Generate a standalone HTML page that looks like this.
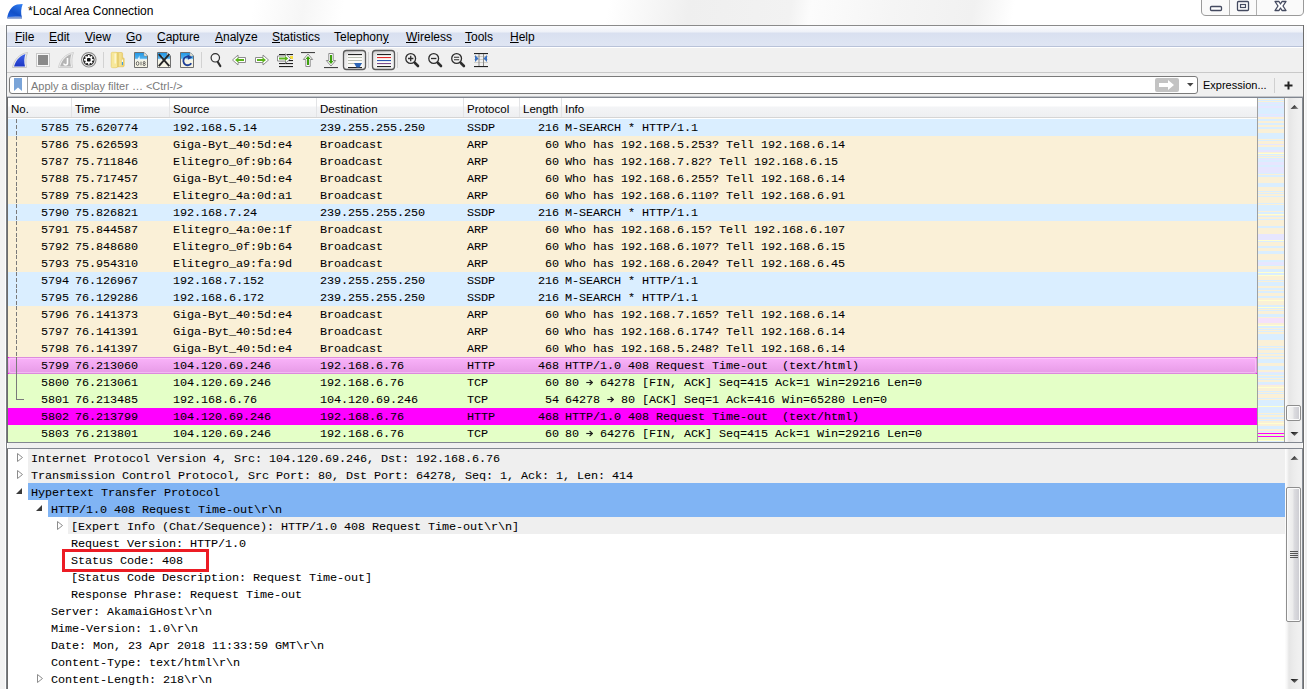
<!DOCTYPE html><html><head><meta charset="utf-8"><style>
*{margin:0;padding:0;box-sizing:border-box}
html,body{width:1307px;height:689px;overflow:hidden;background:#fff;position:relative;font-family:"Liberation Sans",sans-serif;font-size:12px;color:#000}
.a{position:absolute}
.m{font-family:"Liberation Mono",monospace;font-size:11.8px;white-space:pre;line-height:17px;letter-spacing:-0.08px;-webkit-text-stroke:0.05px #000}
.s{font-family:"Liberation Sans",sans-serif;font-size:12px;white-space:pre}
u{text-decoration:underline;text-underline-offset:0.5px;text-decoration-thickness:1px}
</style></head><body><div class="a" style="left:0;top:0;width:1307px;height:689px;background:#fff"></div>
<div class="a" style="left:0;top:0;width:1307px;height:25px;background:linear-gradient(100deg,#fff 0,#fff 250px,#f6f6f6 300px,#fff 340px,#fff 600px,#efefef 680px,#f2f2f2 780px,#fcfcfc 800px,#f5f5f5 880px,#f1f1f1 960px,#fff 1000px,#fff 1307px)"></div>
<svg class="a" style="left:0px;top:0px" width="26" height="22" viewBox="0 0 26 22">
<defs><linearGradient id="sg" x1="0.8" y1="0" x2="0.2" y2="1"><stop offset="0" stop-color="#2f7cf0"/><stop offset="0.6" stop-color="#1250c8"/><stop offset="1" stop-color="#1a5fe0"/></linearGradient>
<linearGradient id="sb" x1="0" y1="0" x2="0" y2="1"><stop offset="0" stop-color="#8fb0f0"/><stop offset="1" stop-color="#6f86b8"/></linearGradient></defs>
<path d="M7.2 18.2 C8 12 11.5 6 17 4.6 L22.7 4 C21 8.5 20.6 13 22 17.5 L22 18.2 Z" fill="url(#sg)"/>
<path d="M7.6 17 C12 16.3 18 16.3 22 16.8 L22 18.5 L7.2 18.5 Z" fill="url(#sb)"/>
</svg>
<div class="a s" style="left:28px;top:3px;width:300px;height:16px;font-size:12px;line-height:16px;">*Local Area Connection</div>
<svg class="a" style="left:1201px;top:0px" width="104" height="17" viewBox="0 0 104 17">
<path d="M0.5 -1 V11 Q0.5 15.5 5 15.5 H98 Q102.5 15.5 102.5 11 V-1" fill="#fafafa" stroke="#9a9a9a"/>
<line x1="28.5" y1="0" x2="28.5" y2="15" stroke="#b0b0b0"/>
<line x1="55.5" y1="0" x2="55.5" y2="15" stroke="#b0b0b0"/>
<rect x="9.5" y="6.5" width="11" height="4" rx="1" fill="#fff" stroke="#444a60" stroke-width="1.3"/>
<rect x="36.5" y="1.5" width="11" height="9" rx="1" fill="#fff" stroke="#444a60" stroke-width="1.3"/>
<rect x="39.5" y="4.5" width="5" height="3" fill="#fff" stroke="#444a60" stroke-width="1.2"/>
<path d="M74 1.5 L78 1.5 L79.5 4 L81 1.5 L85 1.5 L82 6 L85 10.5 L81 10.5 L79.5 8 L78 10.5 L74 10.5 L77 6 Z" fill="#fff" stroke="#444a60" stroke-width="1.3" stroke-linejoin="round"/>
</svg>
<div class="a" style="left:6px;top:25px;width:1298px;height:664px;background:#f0f0f0;border:2px solid #8a8a8a;border-bottom:none;border-top:1px solid #8a8a8a"></div>
<div class="a" style="left:7px;top:26px;width:1296px;height:20px;background:linear-gradient(#fbfcfe 0px,#eef1f8 6px,#d9e0f0 7px,#dfe5f3 19px);"></div>
<div class="a" style="left:7px;top:46px;width:1296px;height:1px;background:#b8c2d8"></div>
<div class="a s" style="left:15px;top:29px;width:100px;height:16px;line-height:16px;"><u>F</u>ile</div>
<div class="a s" style="left:49px;top:29px;width:100px;height:16px;line-height:16px;"><u>E</u>dit</div>
<div class="a s" style="left:85px;top:29px;width:100px;height:16px;line-height:16px;"><u>V</u>iew</div>
<div class="a s" style="left:126px;top:29px;width:100px;height:16px;line-height:16px;"><u>G</u>o</div>
<div class="a s" style="left:157px;top:29px;width:100px;height:16px;line-height:16px;"><u>C</u>apture</div>
<div class="a s" style="left:215px;top:29px;width:100px;height:16px;line-height:16px;"><u>A</u>nalyze</div>
<div class="a s" style="left:272px;top:29px;width:100px;height:16px;line-height:16px;"><u>S</u>tatistics</div>
<div class="a s" style="left:334px;top:29px;width:100px;height:16px;line-height:16px;">Telephon<u>y</u></div>
<div class="a s" style="left:406px;top:29px;width:100px;height:16px;line-height:16px;"><u>W</u>ireless</div>
<div class="a s" style="left:465px;top:29px;width:100px;height:16px;line-height:16px;"><u>T</u>ools</div>
<div class="a s" style="left:510px;top:29px;width:100px;height:16px;line-height:16px;"><u>H</u>elp</div>
<div class="a" style="left:7px;top:47px;width:1296px;height:25px;background:#f0f0f0;border-top:1px solid #fff"></div>
<div class="a" style="left:7px;top:72px;width:1296px;height:1px;background:#c9c9c9"></div>
<div class="a" style="left:7px;top:73px;width:1296px;height:24px;background:#f0f0f0"></div>
<div class="a" style="left:9px;top:76px;width:1189px;height:18px;background:#fff;border:1px solid #7a7a7a;border-radius:3px"></div>
<div class="a" style="left:27px;top:77px;width:1px;height:16px;background:#a0a0a0"></div>
<svg class="a" style="left:14px;top:78px" width="9" height="14" viewBox="0 0 9 14"><path d="M0 0 H8 V13 L4 9.5 L0 13 Z" fill="#7aa4d8"/></svg>
<div class="a s" style="left:31px;top:78px;width:400px;height:16px;line-height:16px;color:#7a7a7a;font-size:11px">Apply a display filter … &lt;Ctrl-/&gt;</div>
<svg class="a" style="left:1155px;top:78px" width="24" height="14" viewBox="0 0 24 14"><rect x="0" y="0" width="24" height="14" rx="2" fill="#c3c3c3"/><path d="M4 5 H13 V2 L19 7 L13 12 V9 H4 Z" fill="#fff"/></svg>
<svg class="a" style="left:1187px;top:83px" width="7" height="4" viewBox="0 0 7 4"><path d="M0 0 H6.5 L3.25 3.5Z" fill="#444"/></svg>
<div class="a s" style="left:1203px;top:77px;width:70px;height:16px;line-height:16px;font-size:11px">Expression...</div>
<div class="a" style="left:1274px;top:78px;width:1px;height:15px;background:#d0d0d0"></div>
<svg class="a" style="left:1284px;top:81px" width="9" height="9" viewBox="0 0 9 9"><path d="M3.5 0.5 H5.5 V3.5 H8.5 V5.5 H5.5 V8.5 H3.5 V5.5 H0.5 V3.5 H3.5Z" fill="#222"/></svg>
<div class="a" style="left:7px;top:96px;width:1296px;height:1px;background:#c4c6ca"></div>
<div class="a" style="left:7px;top:97px;width:1296px;height:346px;border:1px solid #828790;border-left:none;border-right:none;background:#fff"></div>
<div class="a" style="left:8px;top:98px;width:1249px;height:20px;background:linear-gradient(#ffffff 0px,#ffffff 8px,#f3f4f6 9px,#eeeff1 19px);border-bottom:1px solid #d5d5d5"></div>
<div class="a s" style="left:11px;top:101px;width:100px;height:16px;line-height:16px;font-size:11.5px">No.</div>
<div class="a" style="left:71px;top:98px;width:1px;height:19px;background:#e3e4e6"></div>
<div class="a s" style="left:75px;top:101px;width:100px;height:16px;line-height:16px;font-size:11.5px">Time</div>
<div class="a" style="left:169px;top:98px;width:1px;height:19px;background:#e3e4e6"></div>
<div class="a s" style="left:173px;top:101px;width:100px;height:16px;line-height:16px;font-size:11.5px">Source</div>
<div class="a" style="left:316px;top:98px;width:1px;height:19px;background:#e3e4e6"></div>
<div class="a s" style="left:320px;top:101px;width:100px;height:16px;line-height:16px;font-size:11.5px">Destination</div>
<div class="a" style="left:463px;top:98px;width:1px;height:19px;background:#e3e4e6"></div>
<div class="a s" style="left:467px;top:101px;width:100px;height:16px;line-height:16px;font-size:11.5px">Protocol</div>
<div class="a" style="left:519px;top:98px;width:1px;height:19px;background:#e3e4e6"></div>
<div class="a s" style="left:523px;top:101px;width:100px;height:16px;line-height:16px;font-size:11.5px">Length</div>
<div class="a" style="left:561px;top:98px;width:1px;height:19px;background:#e3e4e6"></div>
<div class="a s" style="left:565px;top:101px;width:100px;height:16px;line-height:16px;font-size:11.5px">Info</div>
<div class="a" style="left:8px;top:119px;width:1249px;height:17px;background:#daeeff"></div>
<div class="a m" style="left:41.0px;top:120px;width:29.0px;height:17px;">5785</div>
<div class="a m" style="left:75px;top:120px;width:100px;height:17px;">75.620774</div>
<div class="a m" style="left:173px;top:120px;width:150px;height:17px;">192.168.5.14</div>
<div class="a m" style="left:320px;top:120px;width:150px;height:17px;">239.255.255.250</div>
<div class="a m" style="left:467px;top:120px;width:60px;height:17px;">SSDP</div>
<div class="a m" style="left:538.0px;top:120px;width:30px;height:17px;">216</div>
<div class="a m" style="left:565px;top:120px;width:690px;height:17px;">M-SEARCH * HTTP/1.1</div>
<div class="a" style="left:8px;top:136px;width:1249px;height:17px;background:#faf0d7"></div>
<div class="a m" style="left:41.0px;top:137px;width:29.0px;height:17px;">5786</div>
<div class="a m" style="left:75px;top:137px;width:100px;height:17px;">75.626593</div>
<div class="a m" style="left:173px;top:137px;width:150px;height:17px;">Giga-Byt_40:5d:e4</div>
<div class="a m" style="left:320px;top:137px;width:150px;height:17px;">Broadcast</div>
<div class="a m" style="left:467px;top:137px;width:60px;height:17px;">ARP</div>
<div class="a m" style="left:545.0px;top:137px;width:30px;height:17px;">60</div>
<div class="a m" style="left:565px;top:137px;width:690px;height:17px;">Who has 192.168.5.253? Tell 192.168.6.14</div>
<div class="a" style="left:8px;top:153px;width:1249px;height:17px;background:#faf0d7"></div>
<div class="a m" style="left:41.0px;top:154px;width:29.0px;height:17px;">5787</div>
<div class="a m" style="left:75px;top:154px;width:100px;height:17px;">75.711846</div>
<div class="a m" style="left:173px;top:154px;width:150px;height:17px;">Elitegro_0f:9b:64</div>
<div class="a m" style="left:320px;top:154px;width:150px;height:17px;">Broadcast</div>
<div class="a m" style="left:467px;top:154px;width:60px;height:17px;">ARP</div>
<div class="a m" style="left:545.0px;top:154px;width:30px;height:17px;">60</div>
<div class="a m" style="left:565px;top:154px;width:690px;height:17px;">Who has 192.168.7.82? Tell 192.168.6.15</div>
<div class="a" style="left:8px;top:170px;width:1249px;height:17px;background:#faf0d7"></div>
<div class="a m" style="left:41.0px;top:171px;width:29.0px;height:17px;">5788</div>
<div class="a m" style="left:75px;top:171px;width:100px;height:17px;">75.717457</div>
<div class="a m" style="left:173px;top:171px;width:150px;height:17px;">Giga-Byt_40:5d:e4</div>
<div class="a m" style="left:320px;top:171px;width:150px;height:17px;">Broadcast</div>
<div class="a m" style="left:467px;top:171px;width:60px;height:17px;">ARP</div>
<div class="a m" style="left:545.0px;top:171px;width:30px;height:17px;">60</div>
<div class="a m" style="left:565px;top:171px;width:690px;height:17px;">Who has 192.168.6.255? Tell 192.168.6.14</div>
<div class="a" style="left:8px;top:187px;width:1249px;height:17px;background:#faf0d7"></div>
<div class="a m" style="left:41.0px;top:188px;width:29.0px;height:17px;">5789</div>
<div class="a m" style="left:75px;top:188px;width:100px;height:17px;">75.821423</div>
<div class="a m" style="left:173px;top:188px;width:150px;height:17px;">Elitegro_4a:0d:a1</div>
<div class="a m" style="left:320px;top:188px;width:150px;height:17px;">Broadcast</div>
<div class="a m" style="left:467px;top:188px;width:60px;height:17px;">ARP</div>
<div class="a m" style="left:545.0px;top:188px;width:30px;height:17px;">60</div>
<div class="a m" style="left:565px;top:188px;width:690px;height:17px;">Who has 192.168.6.110? Tell 192.168.6.91</div>
<div class="a" style="left:8px;top:204px;width:1249px;height:17px;background:#daeeff"></div>
<div class="a m" style="left:41.0px;top:205px;width:29.0px;height:17px;">5790</div>
<div class="a m" style="left:75px;top:205px;width:100px;height:17px;">75.826821</div>
<div class="a m" style="left:173px;top:205px;width:150px;height:17px;">192.168.7.24</div>
<div class="a m" style="left:320px;top:205px;width:150px;height:17px;">239.255.255.250</div>
<div class="a m" style="left:467px;top:205px;width:60px;height:17px;">SSDP</div>
<div class="a m" style="left:538.0px;top:205px;width:30px;height:17px;">216</div>
<div class="a m" style="left:565px;top:205px;width:690px;height:17px;">M-SEARCH * HTTP/1.1</div>
<div class="a" style="left:8px;top:221px;width:1249px;height:17px;background:#faf0d7"></div>
<div class="a m" style="left:41.0px;top:222px;width:29.0px;height:17px;">5791</div>
<div class="a m" style="left:75px;top:222px;width:100px;height:17px;">75.844587</div>
<div class="a m" style="left:173px;top:222px;width:150px;height:17px;">Elitegro_4a:0e:1f</div>
<div class="a m" style="left:320px;top:222px;width:150px;height:17px;">Broadcast</div>
<div class="a m" style="left:467px;top:222px;width:60px;height:17px;">ARP</div>
<div class="a m" style="left:545.0px;top:222px;width:30px;height:17px;">60</div>
<div class="a m" style="left:565px;top:222px;width:690px;height:17px;">Who has 192.168.6.15? Tell 192.168.6.107</div>
<div class="a" style="left:8px;top:238px;width:1249px;height:17px;background:#faf0d7"></div>
<div class="a m" style="left:41.0px;top:239px;width:29.0px;height:17px;">5792</div>
<div class="a m" style="left:75px;top:239px;width:100px;height:17px;">75.848680</div>
<div class="a m" style="left:173px;top:239px;width:150px;height:17px;">Elitegro_0f:9b:64</div>
<div class="a m" style="left:320px;top:239px;width:150px;height:17px;">Broadcast</div>
<div class="a m" style="left:467px;top:239px;width:60px;height:17px;">ARP</div>
<div class="a m" style="left:545.0px;top:239px;width:30px;height:17px;">60</div>
<div class="a m" style="left:565px;top:239px;width:690px;height:17px;">Who has 192.168.6.107? Tell 192.168.6.15</div>
<div class="a" style="left:8px;top:255px;width:1249px;height:17px;background:#faf0d7"></div>
<div class="a m" style="left:41.0px;top:256px;width:29.0px;height:17px;">5793</div>
<div class="a m" style="left:75px;top:256px;width:100px;height:17px;">75.954310</div>
<div class="a m" style="left:173px;top:256px;width:150px;height:17px;">Elitegro_a9:fa:9d</div>
<div class="a m" style="left:320px;top:256px;width:150px;height:17px;">Broadcast</div>
<div class="a m" style="left:467px;top:256px;width:60px;height:17px;">ARP</div>
<div class="a m" style="left:545.0px;top:256px;width:30px;height:17px;">60</div>
<div class="a m" style="left:565px;top:256px;width:690px;height:17px;">Who has 192.168.6.204? Tell 192.168.6.45</div>
<div class="a" style="left:8px;top:272px;width:1249px;height:17px;background:#daeeff"></div>
<div class="a m" style="left:41.0px;top:273px;width:29.0px;height:17px;">5794</div>
<div class="a m" style="left:75px;top:273px;width:100px;height:17px;">76.126967</div>
<div class="a m" style="left:173px;top:273px;width:150px;height:17px;">192.168.7.152</div>
<div class="a m" style="left:320px;top:273px;width:150px;height:17px;">239.255.255.250</div>
<div class="a m" style="left:467px;top:273px;width:60px;height:17px;">SSDP</div>
<div class="a m" style="left:538.0px;top:273px;width:30px;height:17px;">216</div>
<div class="a m" style="left:565px;top:273px;width:690px;height:17px;">M-SEARCH * HTTP/1.1</div>
<div class="a" style="left:8px;top:289px;width:1249px;height:17px;background:#daeeff"></div>
<div class="a m" style="left:41.0px;top:290px;width:29.0px;height:17px;">5795</div>
<div class="a m" style="left:75px;top:290px;width:100px;height:17px;">76.129286</div>
<div class="a m" style="left:173px;top:290px;width:150px;height:17px;">192.168.6.172</div>
<div class="a m" style="left:320px;top:290px;width:150px;height:17px;">239.255.255.250</div>
<div class="a m" style="left:467px;top:290px;width:60px;height:17px;">SSDP</div>
<div class="a m" style="left:538.0px;top:290px;width:30px;height:17px;">216</div>
<div class="a m" style="left:565px;top:290px;width:690px;height:17px;">M-SEARCH * HTTP/1.1</div>
<div class="a" style="left:8px;top:306px;width:1249px;height:17px;background:#faf0d7"></div>
<div class="a m" style="left:41.0px;top:307px;width:29.0px;height:17px;">5796</div>
<div class="a m" style="left:75px;top:307px;width:100px;height:17px;">76.141373</div>
<div class="a m" style="left:173px;top:307px;width:150px;height:17px;">Giga-Byt_40:5d:e4</div>
<div class="a m" style="left:320px;top:307px;width:150px;height:17px;">Broadcast</div>
<div class="a m" style="left:467px;top:307px;width:60px;height:17px;">ARP</div>
<div class="a m" style="left:545.0px;top:307px;width:30px;height:17px;">60</div>
<div class="a m" style="left:565px;top:307px;width:690px;height:17px;">Who has 192.168.7.165? Tell 192.168.6.14</div>
<div class="a" style="left:8px;top:323px;width:1249px;height:17px;background:#faf0d7"></div>
<div class="a m" style="left:41.0px;top:324px;width:29.0px;height:17px;">5797</div>
<div class="a m" style="left:75px;top:324px;width:100px;height:17px;">76.141391</div>
<div class="a m" style="left:173px;top:324px;width:150px;height:17px;">Giga-Byt_40:5d:e4</div>
<div class="a m" style="left:320px;top:324px;width:150px;height:17px;">Broadcast</div>
<div class="a m" style="left:467px;top:324px;width:60px;height:17px;">ARP</div>
<div class="a m" style="left:545.0px;top:324px;width:30px;height:17px;">60</div>
<div class="a m" style="left:565px;top:324px;width:690px;height:17px;">Who has 192.168.6.174? Tell 192.168.6.14</div>
<div class="a" style="left:8px;top:340px;width:1249px;height:17px;background:#faf0d7"></div>
<div class="a m" style="left:41.0px;top:341px;width:29.0px;height:17px;">5798</div>
<div class="a m" style="left:75px;top:341px;width:100px;height:17px;">76.141397</div>
<div class="a m" style="left:173px;top:341px;width:150px;height:17px;">Giga-Byt_40:5d:e4</div>
<div class="a m" style="left:320px;top:341px;width:150px;height:17px;">Broadcast</div>
<div class="a m" style="left:467px;top:341px;width:60px;height:17px;">ARP</div>
<div class="a m" style="left:545.0px;top:341px;width:30px;height:17px;">60</div>
<div class="a m" style="left:565px;top:341px;width:690px;height:17px;">Who has 192.168.5.248? Tell 192.168.6.14</div>
<div class="a" style="left:8px;top:357px;width:1249px;height:17px;background:linear-gradient(#f9b2f9,#e79be7);border-top:1px solid #dd8cdd;border-bottom:1px solid #dc8adc;border-right:1px solid #e49ce4"></div>
<div class="a" style="left:9px;top:358px;width:1247px;height:15px;border:1px solid rgba(255,220,255,0.45);border-radius:2px"></div>
<div class="a" style="left:8px;top:357px;width:1px;height:1px;background:#ff00ff"></div>
<div class="a" style="left:1256px;top:357px;width:1px;height:1px;background:#ff00ff"></div>
<div class="a" style="left:8px;top:373px;width:1px;height:1px;background:#ff00ff"></div>
<div class="a" style="left:1256px;top:373px;width:1px;height:1px;background:#ff00ff"></div>
<div class="a m" style="left:41.0px;top:358px;width:29.0px;height:17px;">5799</div>
<div class="a m" style="left:75px;top:358px;width:100px;height:17px;">76.213060</div>
<div class="a m" style="left:173px;top:358px;width:150px;height:17px;">104.120.69.246</div>
<div class="a m" style="left:320px;top:358px;width:150px;height:17px;">192.168.6.76</div>
<div class="a m" style="left:467px;top:358px;width:60px;height:17px;">HTTP</div>
<div class="a m" style="left:538.0px;top:358px;width:30px;height:17px;">468</div>
<div class="a m" style="left:565px;top:358px;width:690px;height:17px;">HTTP/1.0 408 Request Time-out  (text/html)</div>
<div class="a" style="left:8px;top:374px;width:1249px;height:17px;background:#e4ffc7"></div>
<div class="a m" style="left:41.0px;top:375px;width:29.0px;height:17px;">5800</div>
<div class="a m" style="left:75px;top:375px;width:100px;height:17px;">76.213061</div>
<div class="a m" style="left:173px;top:375px;width:150px;height:17px;">104.120.69.246</div>
<div class="a m" style="left:320px;top:375px;width:150px;height:17px;">192.168.6.76</div>
<div class="a m" style="left:467px;top:375px;width:60px;height:17px;">TCP</div>
<div class="a m" style="left:545.0px;top:375px;width:30px;height:17px;">60</div>
<div class="a m" style="left:565px;top:375px;width:690px;height:17px;">80 <svg style="display:inline-block;vertical-align:top;margin-top:4px;margin-right:-0.08px" width="7" height="7" viewBox="0 0 7 7"><path d="M0.3 3.5 H5.8" stroke="#1a1a1a" stroke-width="1.1"/><path d="M3.6 1.0 L6.4 3.5 L3.6 6.0" fill="none" stroke="#1a1a1a" stroke-width="1.1"/></svg> 64278 [FIN, ACK] Seq=415 Ack=1 Win=29216 Len=0</div>
<div class="a" style="left:8px;top:391px;width:1249px;height:17px;background:#e4ffc7"></div>
<div class="a m" style="left:41.0px;top:392px;width:29.0px;height:17px;">5801</div>
<div class="a m" style="left:75px;top:392px;width:100px;height:17px;">76.213485</div>
<div class="a m" style="left:173px;top:392px;width:150px;height:17px;">192.168.6.76</div>
<div class="a m" style="left:320px;top:392px;width:150px;height:17px;">104.120.69.246</div>
<div class="a m" style="left:467px;top:392px;width:60px;height:17px;">TCP</div>
<div class="a m" style="left:545.0px;top:392px;width:30px;height:17px;">54</div>
<div class="a m" style="left:565px;top:392px;width:690px;height:17px;">64278 <svg style="display:inline-block;vertical-align:top;margin-top:4px;margin-right:-0.08px" width="7" height="7" viewBox="0 0 7 7"><path d="M0.3 3.5 H5.8" stroke="#1a1a1a" stroke-width="1.1"/><path d="M3.6 1.0 L6.4 3.5 L3.6 6.0" fill="none" stroke="#1a1a1a" stroke-width="1.1"/></svg> 80 [ACK] Seq=1 Ack=416 Win=65280 Len=0</div>
<div class="a" style="left:8px;top:408px;width:1249px;height:17px;background:#ff00ff"></div>
<div class="a m" style="left:41.0px;top:409px;width:29.0px;height:17px;">5802</div>
<div class="a m" style="left:75px;top:409px;width:100px;height:17px;">76.213799</div>
<div class="a m" style="left:173px;top:409px;width:150px;height:17px;">104.120.69.246</div>
<div class="a m" style="left:320px;top:409px;width:150px;height:17px;">192.168.6.76</div>
<div class="a m" style="left:467px;top:409px;width:60px;height:17px;">HTTP</div>
<div class="a m" style="left:538.0px;top:409px;width:30px;height:17px;">468</div>
<div class="a m" style="left:565px;top:409px;width:690px;height:17px;">HTTP/1.0 408 Request Time-out  (text/html)</div>
<div class="a" style="left:8px;top:425px;width:1249px;height:17px;background:#e4ffc7"></div>
<div class="a m" style="left:41.0px;top:426px;width:29.0px;height:17px;">5803</div>
<div class="a m" style="left:75px;top:426px;width:100px;height:17px;">76.213801</div>
<div class="a m" style="left:173px;top:426px;width:150px;height:17px;">104.120.69.246</div>
<div class="a m" style="left:320px;top:426px;width:150px;height:17px;">192.168.6.76</div>
<div class="a m" style="left:467px;top:426px;width:60px;height:17px;">TCP</div>
<div class="a m" style="left:545.0px;top:426px;width:30px;height:17px;">60</div>
<div class="a m" style="left:565px;top:426px;width:690px;height:17px;">80 <svg style="display:inline-block;vertical-align:top;margin-top:4px;margin-right:-0.08px" width="7" height="7" viewBox="0 0 7 7"><path d="M0.3 3.5 H5.8" stroke="#1a1a1a" stroke-width="1.1"/><path d="M3.6 1.0 L6.4 3.5 L3.6 6.0" fill="none" stroke="#1a1a1a" stroke-width="1.1"/></svg> 64276 [FIN, ACK] Seq=415 Ack=1 Win=29216 Len=0</div>
<div class="a" style="left:16px;top:119px;width:1px;height:17px;background:repeating-linear-gradient(#7a7a7a 0 4px,transparent 4px 6px)"></div>
<div class="a" style="left:16px;top:136px;width:1px;height:17px;background:repeating-linear-gradient(#7a7a7a 0 4px,transparent 4px 6px)"></div>
<div class="a" style="left:16px;top:153px;width:1px;height:17px;background:repeating-linear-gradient(#7a7a7a 0 4px,transparent 4px 6px)"></div>
<div class="a" style="left:16px;top:170px;width:1px;height:17px;background:repeating-linear-gradient(#7a7a7a 0 4px,transparent 4px 6px)"></div>
<div class="a" style="left:16px;top:187px;width:1px;height:17px;background:repeating-linear-gradient(#7a7a7a 0 4px,transparent 4px 6px)"></div>
<div class="a" style="left:16px;top:204px;width:1px;height:17px;background:repeating-linear-gradient(#7a7a7a 0 4px,transparent 4px 6px)"></div>
<div class="a" style="left:16px;top:221px;width:1px;height:17px;background:repeating-linear-gradient(#7a7a7a 0 4px,transparent 4px 6px)"></div>
<div class="a" style="left:16px;top:238px;width:1px;height:17px;background:repeating-linear-gradient(#7a7a7a 0 4px,transparent 4px 6px)"></div>
<div class="a" style="left:16px;top:255px;width:1px;height:17px;background:repeating-linear-gradient(#7a7a7a 0 4px,transparent 4px 6px)"></div>
<div class="a" style="left:16px;top:272px;width:1px;height:17px;background:repeating-linear-gradient(#7a7a7a 0 4px,transparent 4px 6px)"></div>
<div class="a" style="left:16px;top:289px;width:1px;height:17px;background:repeating-linear-gradient(#7a7a7a 0 4px,transparent 4px 6px)"></div>
<div class="a" style="left:16px;top:306px;width:1px;height:17px;background:repeating-linear-gradient(#7a7a7a 0 4px,transparent 4px 6px)"></div>
<div class="a" style="left:16px;top:323px;width:1px;height:17px;background:repeating-linear-gradient(#7a7a7a 0 4px,transparent 4px 6px)"></div>
<div class="a" style="left:16px;top:340px;width:1px;height:17px;background:repeating-linear-gradient(#7a7a7a 0 4px,transparent 4px 6px)"></div>
<div class="a" style="left:16px;top:357px;width:1px;height:43px;background:#7a7a7a"></div>
<div class="a" style="left:16px;top:399px;width:8px;height:1px;background:#7a7a7a"></div>
<div class="a" style="left:1257px;top:98px;width:1px;height:344px;background:#a0a0a0"></div>
<div class="a" style="left:1258px;top:98px;width:26px;height:1px;background:#daeeff"></div>
<div class="a" style="left:1258px;top:99px;width:26px;height:1px;background:#faf0d7"></div>
<div class="a" style="left:1258px;top:100px;width:26px;height:1px;background:#daeeff"></div>
<div class="a" style="left:1258px;top:101px;width:26px;height:1px;background:#faf0d7"></div>
<div class="a" style="left:1258px;top:102px;width:26px;height:1px;background:#daeeff"></div>
<div class="a" style="left:1258px;top:103px;width:26px;height:1px;background:#e7e6ff"></div>
<div class="a" style="left:1258px;top:104px;width:26px;height:2px;background:#daeeff"></div>
<div class="a" style="left:1258px;top:106px;width:26px;height:2px;background:#e7e6ff"></div>
<div class="a" style="left:1258px;top:108px;width:26px;height:6px;background:#daeeff"></div>
<div class="a" style="left:1258px;top:114px;width:26px;height:1px;background:#e7e6ff"></div>
<div class="a" style="left:1258px;top:115px;width:26px;height:1px;background:#daeeff"></div>
<div class="a" style="left:1258px;top:116px;width:26px;height:1px;background:#e7e6ff"></div>
<div class="a" style="left:1258px;top:117px;width:26px;height:2px;background:#faf0d7"></div>
<div class="a" style="left:1258px;top:119px;width:26px;height:2px;background:#daeeff"></div>
<div class="a" style="left:1258px;top:121px;width:26px;height:2px;background:#faf0d7"></div>
<div class="a" style="left:1258px;top:123px;width:26px;height:2px;background:#daeeff"></div>
<div class="a" style="left:1258px;top:125px;width:26px;height:2px;background:#faf0d7"></div>
<div class="a" style="left:1258px;top:127px;width:26px;height:2px;background:#daeeff"></div>
<div class="a" style="left:1258px;top:129px;width:26px;height:4px;background:#faf0d7"></div>
<div class="a" style="left:1258px;top:133px;width:26px;height:6px;background:#daeeff"></div>
<div class="a" style="left:1258px;top:139px;width:26px;height:1px;background:#faf0d7"></div>
<div class="a" style="left:1258px;top:140px;width:26px;height:1px;background:#daeeff"></div>
<div class="a" style="left:1258px;top:141px;width:26px;height:3px;background:#faf0d7"></div>
<div class="a" style="left:1258px;top:144px;width:26px;height:1px;background:#e7e6ff"></div>
<div class="a" style="left:1258px;top:145px;width:26px;height:2px;background:#faf0d7"></div>
<div class="a" style="left:1258px;top:147px;width:26px;height:3px;background:#daeeff"></div>
<div class="a" style="left:1258px;top:150px;width:26px;height:2px;background:#e7e6ff"></div>
<div class="a" style="left:1258px;top:152px;width:26px;height:1px;background:#faf0d7"></div>
<div class="a" style="left:1258px;top:153px;width:26px;height:1px;background:#ffffd0"></div>
<div class="a" style="left:1258px;top:154px;width:26px;height:1px;background:#daeeff"></div>
<div class="a" style="left:1258px;top:155px;width:26px;height:1px;background:#faf0d7"></div>
<div class="a" style="left:1258px;top:156px;width:26px;height:1px;background:#daeeff"></div>
<div class="a" style="left:1258px;top:157px;width:26px;height:1px;background:#faf0d7"></div>
<div class="a" style="left:1258px;top:158px;width:26px;height:1px;background:#daeeff"></div>
<div class="a" style="left:1258px;top:159px;width:26px;height:1px;background:#e7e6ff"></div>
<div class="a" style="left:1258px;top:160px;width:26px;height:2px;background:#daeeff"></div>
<div class="a" style="left:1258px;top:162px;width:26px;height:3px;background:#e7e6ff"></div>
<div class="a" style="left:1258px;top:165px;width:26px;height:2px;background:#daeeff"></div>
<div class="a" style="left:1258px;top:167px;width:26px;height:6px;background:#e7e6ff"></div>
<div class="a" style="left:1258px;top:173px;width:26px;height:1px;background:#daeeff"></div>
<div class="a" style="left:1258px;top:174px;width:26px;height:1px;background:#faf0d7"></div>
<div class="a" style="left:1258px;top:175px;width:26px;height:2px;background:#daeeff"></div>
<div class="a" style="left:1258px;top:177px;width:26px;height:6px;background:#faf0d7"></div>
<div class="a" style="left:1258px;top:183px;width:26px;height:4px;background:#daeeff"></div>
<div class="a" style="left:1258px;top:187px;width:26px;height:4px;background:#faf0d7"></div>
<div class="a" style="left:1258px;top:191px;width:26px;height:1px;background:#daeeff"></div>
<div class="a" style="left:1258px;top:192px;width:26px;height:1px;background:#faf0d7"></div>
<div class="a" style="left:1258px;top:193px;width:26px;height:1px;background:#daeeff"></div>
<div class="a" style="left:1258px;top:194px;width:26px;height:2px;background:#faf0d7"></div>
<div class="a" style="left:1258px;top:196px;width:26px;height:1px;background:#daeeff"></div>
<div class="a" style="left:1258px;top:197px;width:26px;height:6px;background:#faf0d7"></div>
<div class="a" style="left:1258px;top:203px;width:26px;height:1px;background:#daeeff"></div>
<div class="a" style="left:1258px;top:204px;width:26px;height:1px;background:#faf0d7"></div>
<div class="a" style="left:1258px;top:205px;width:26px;height:6px;background:#daeeff"></div>
<div class="a" style="left:1258px;top:211px;width:26px;height:1px;background:#faf0d7"></div>
<div class="a" style="left:1258px;top:212px;width:26px;height:2px;background:#daeeff"></div>
<div class="a" style="left:1258px;top:214px;width:26px;height:1px;background:#ffffd0"></div>
<div class="a" style="left:1258px;top:215px;width:26px;height:1px;background:#faf0d7"></div>
<div class="a" style="left:1258px;top:216px;width:26px;height:1px;background:#daeeff"></div>
<div class="a" style="left:1258px;top:217px;width:26px;height:2px;background:#faf0d7"></div>
<div class="a" style="left:1258px;top:219px;width:26px;height:1px;background:#daeeff"></div>
<div class="a" style="left:1258px;top:220px;width:26px;height:6px;background:#faf0d7"></div>
<div class="a" style="left:1258px;top:226px;width:26px;height:2px;background:#daeeff"></div>
<div class="a" style="left:1258px;top:228px;width:26px;height:6px;background:#faf0d7"></div>
<div class="a" style="left:1258px;top:234px;width:26px;height:6px;background:#e7e6ff"></div>
<div class="a" style="left:1258px;top:240px;width:26px;height:1px;background:#ffffd0"></div>
<div class="a" style="left:1258px;top:241px;width:26px;height:1px;background:#daeeff"></div>
<div class="a" style="left:1258px;top:242px;width:26px;height:4px;background:#faf0d7"></div>
<div class="a" style="left:1258px;top:246px;width:26px;height:2px;background:#daeeff"></div>
<div class="a" style="left:1258px;top:248px;width:26px;height:3px;background:#faf0d7"></div>
<div class="a" style="left:1258px;top:251px;width:26px;height:3px;background:#daeeff"></div>
<div class="a" style="left:1258px;top:254px;width:26px;height:6px;background:#faf0d7"></div>
<div class="a" style="left:1258px;top:260px;width:26px;height:2px;background:#daeeff"></div>
<div class="a" style="left:1258px;top:262px;width:26px;height:3px;background:#e7e6ff"></div>
<div class="a" style="left:1258px;top:265px;width:26px;height:1px;background:#daeeff"></div>
<div class="a" style="left:1258px;top:266px;width:26px;height:3px;background:#faf0d7"></div>
<div class="a" style="left:1258px;top:269px;width:26px;height:3px;background:#daeeff"></div>
<div class="a" style="left:1258px;top:272px;width:26px;height:1px;background:#ffffd0"></div>
<div class="a" style="left:1258px;top:273px;width:26px;height:2px;background:#daeeff"></div>
<div class="a" style="left:1258px;top:275px;width:26px;height:1px;background:#ffffd0"></div>
<div class="a" style="left:1258px;top:276px;width:26px;height:4px;background:#faf0d7"></div>
<div class="a" style="left:1258px;top:280px;width:26px;height:1px;background:#daeeff"></div>
<div class="a" style="left:1258px;top:281px;width:26px;height:1px;background:#faf0d7"></div>
<div class="a" style="left:1258px;top:282px;width:26px;height:4px;background:#daeeff"></div>
<div class="a" style="left:1258px;top:286px;width:26px;height:2px;background:#faf0d7"></div>
<div class="a" style="left:1258px;top:288px;width:26px;height:2px;background:#daeeff"></div>
<div class="a" style="left:1258px;top:290px;width:26px;height:1px;background:#faf0d7"></div>
<div class="a" style="left:1258px;top:291px;width:26px;height:2px;background:#daeeff"></div>
<div class="a" style="left:1258px;top:293px;width:26px;height:3px;background:#faf0d7"></div>
<div class="a" style="left:1258px;top:296px;width:26px;height:2px;background:#daeeff"></div>
<div class="a" style="left:1258px;top:298px;width:26px;height:2px;background:#faf0d7"></div>
<div class="a" style="left:1258px;top:300px;width:26px;height:1px;background:#ffffd0"></div>
<div class="a" style="left:1258px;top:301px;width:26px;height:4px;background:#faf0d7"></div>
<div class="a" style="left:1258px;top:305px;width:26px;height:2px;background:#daeeff"></div>
<div class="a" style="left:1258px;top:307px;width:26px;height:1px;background:#ffffd0"></div>
<div class="a" style="left:1258px;top:308px;width:26px;height:1px;background:#daeeff"></div>
<div class="a" style="left:1258px;top:309px;width:26px;height:1px;background:#faf0d7"></div>
<div class="a" style="left:1258px;top:310px;width:26px;height:1px;background:#daeeff"></div>
<div class="a" style="left:1258px;top:311px;width:26px;height:3px;background:#faf0d7"></div>
<div class="a" style="left:1258px;top:314px;width:26px;height:3px;background:#daeeff"></div>
<div class="a" style="left:1258px;top:317px;width:26px;height:1px;background:#faf0d7"></div>
<div class="a" style="left:1258px;top:318px;width:26px;height:5px;background:#f5e1fa"></div>
<div class="a" style="left:1258px;top:323px;width:26px;height:2px;background:#faf0d7"></div>
<div class="a" style="left:1258px;top:325px;width:26px;height:1px;background:#ffffd0"></div>
<div class="a" style="left:1258px;top:326px;width:26px;height:2px;background:#daeeff"></div>
<div class="a" style="left:1258px;top:328px;width:26px;height:1px;background:#faf0d7"></div>
<div class="a" style="left:1258px;top:329px;width:26px;height:1px;background:#daeeff"></div>
<div class="a" style="left:1258px;top:330px;width:26px;height:1px;background:#faf0d7"></div>
<div class="a" style="left:1258px;top:331px;width:26px;height:1px;background:#daeeff"></div>
<div class="a" style="left:1258px;top:332px;width:26px;height:2px;background:#faf0d7"></div>
<div class="a" style="left:1258px;top:334px;width:26px;height:6px;background:#daeeff"></div>
<div class="a" style="left:1258px;top:340px;width:26px;height:6px;background:#faf0d7"></div>
<div class="a" style="left:1258px;top:346px;width:26px;height:1px;background:#daeeff"></div>
<div class="a" style="left:1258px;top:347px;width:26px;height:1px;background:#faf0d7"></div>
<div class="a" style="left:1258px;top:348px;width:26px;height:2px;background:#daeeff"></div>
<div class="a" style="left:1258px;top:350px;width:26px;height:3px;background:#faf0d7"></div>
<div class="a" style="left:1258px;top:353px;width:26px;height:1px;background:#daeeff"></div>
<div class="a" style="left:1258px;top:354px;width:26px;height:2px;background:#faf0d7"></div>
<div class="a" style="left:1258px;top:356px;width:26px;height:1px;background:#daeeff"></div>
<div class="a" style="left:1258px;top:357px;width:26px;height:2px;background:#faf0d7"></div>
<div class="a" style="left:1258px;top:359px;width:26px;height:4px;background:#daeeff"></div>
<div class="a" style="left:1258px;top:363px;width:26px;height:3px;background:#faf0d7"></div>
<div class="a" style="left:1258px;top:366px;width:26px;height:4px;background:#daeeff"></div>
<div class="a" style="left:1258px;top:370px;width:26px;height:2px;background:#faf0d7"></div>
<div class="a" style="left:1258px;top:372px;width:26px;height:1px;background:#e7e6ff"></div>
<div class="a" style="left:1258px;top:373px;width:26px;height:2px;background:#daeeff"></div>
<div class="a" style="left:1258px;top:375px;width:26px;height:1px;background:#faf0d7"></div>
<div class="a" style="left:1258px;top:376px;width:26px;height:2px;background:#daeeff"></div>
<div class="a" style="left:1258px;top:378px;width:26px;height:1px;background:#faf0d7"></div>
<div class="a" style="left:1258px;top:379px;width:26px;height:1px;background:#daeeff"></div>
<div class="a" style="left:1258px;top:380px;width:26px;height:2px;background:#faf0d7"></div>
<div class="a" style="left:1258px;top:382px;width:26px;height:2px;background:#daeeff"></div>
<div class="a" style="left:1258px;top:384px;width:26px;height:1px;background:#e7e6ff"></div>
<div class="a" style="left:1258px;top:385px;width:26px;height:2px;background:#faf0d7"></div>
<div class="a" style="left:1258px;top:387px;width:26px;height:1px;background:#ffffd0"></div>
<div class="a" style="left:1258px;top:388px;width:26px;height:3px;background:#faf0d7"></div>
<div class="a" style="left:1258px;top:391px;width:26px;height:1px;background:#daeeff"></div>
<div class="a" style="left:1258px;top:392px;width:26px;height:1px;background:#faf0d7"></div>
<div class="a" style="left:1258px;top:393px;width:26px;height:1px;background:#daeeff"></div>
<div class="a" style="left:1258px;top:394px;width:26px;height:4px;background:#faf0d7"></div>
<div class="a" style="left:1258px;top:398px;width:26px;height:1px;background:#daeeff"></div>
<div class="a" style="left:1258px;top:399px;width:26px;height:1px;background:#faf0d7"></div>
<div class="a" style="left:1258px;top:400px;width:26px;height:6px;background:#daeeff"></div>
<div class="a" style="left:1258px;top:406px;width:26px;height:1px;background:#ffffd0"></div>
<div class="a" style="left:1258px;top:407px;width:26px;height:6px;background:#daeeff"></div>
<div class="a" style="left:1258px;top:413px;width:26px;height:1px;background:#faf0d7"></div>
<div class="a" style="left:1258px;top:414px;width:26px;height:1px;background:#daeeff"></div>
<div class="a" style="left:1258px;top:415px;width:26px;height:2px;background:#faf0d7"></div>
<div class="a" style="left:1258px;top:417px;width:26px;height:2px;background:#daeeff"></div>
<div class="a" style="left:1258px;top:419px;width:26px;height:1px;background:#faf0d7"></div>
<div class="a" style="left:1258px;top:420px;width:26px;height:1px;background:#daeeff"></div>
<div class="a" style="left:1258px;top:421px;width:26px;height:2px;background:#faf0d7"></div>
<div class="a" style="left:1258px;top:423px;width:26px;height:1px;background:#ffffd0"></div>
<div class="a" style="left:1258px;top:424px;width:26px;height:2px;background:#faf0d7"></div>
<div class="a" style="left:1258px;top:426px;width:26px;height:3px;background:#daeeff"></div>
<div class="a" style="left:1258px;top:429px;width:26px;height:2px;background:#faf0d7"></div>
<div class="a" style="left:1258px;top:431px;width:26px;height:1px;background:#daeeff"></div>
<div class="a" style="left:1258px;top:432px;width:26px;height:10px;background:linear-gradient(#faf0d7 0 1px,#ff00ff 1px 2px,#e4ffc7 2px 4px,#ff00ff 4px 5px,#e4ffc7 5px 8px,#ffffd0 8px 9px,#daeeff 9px)"></div>
<div class="a" style="left:1284px;top:98px;width:1px;height:344px;background:#a0a0a0"></div>
<div class="a" style="left:1285px;top:98px;width:17px;height:344px;background:linear-gradient(90deg,#fdfdfd 0,#f6f6f6 2px,#e6e6e6 4px,#ececec 9px,#f0f0f0 14px)"></div>
<svg class="a" style="left:1290px;top:104px" width="9" height="6" viewBox="0 0 9 6"><defs><linearGradient id="ag1" x1="0" y1="0" x2="1" y2="1"><stop offset="0.2" stop-color="#1e1e1e"/><stop offset="1" stop-color="#9a9a9a"/></linearGradient></defs><path d="M0.5 5 L4.5 1 L8.5 5Z" fill="url(#ag1)"/></svg>
<svg class="a" style="left:1290px;top:431px" width="9" height="6" viewBox="0 0 9 6"><defs><linearGradient id="ag2" x1="0" y1="0" x2="1" y2="1"><stop offset="0.2" stop-color="#1e1e1e"/><stop offset="1" stop-color="#9a9a9a"/></linearGradient></defs><path d="M0.5 1 L4.5 5 L8.5 1Z" fill="url(#ag2)"/></svg>
<div class="a" style="left:1286px;top:405px;width:15px;height:16px;background:linear-gradient(90deg,#f6f6f6 0,#ebebeb 6px,#dcdce0 7px,#cbcbd0 13px);border:1px solid #8e8e8e;border-radius:2px;box-shadow:inset 0 0 0 1px #fbfbfb"></div>
<div class="a" style="left:8px;top:443px;width:1294px;height:5px;background:#f0f0f0"></div>
<div class="a" style="left:8px;top:448px;width:1294px;height:1px;background:#828790"></div>
<div class="a" style="left:8px;top:449px;width:1277px;height:240px;background:#fff"></div>
<div class="a" style="left:28px;top:449px;width:1257px;height:17px;background:#efefef"></div>
<div class="a" style="left:28px;top:466px;width:1257px;height:17px;background:#efefef"></div>
<div class="a" style="left:28px;top:483px;width:1257px;height:17px;background:#80b4f4"></div>
<div class="a" style="left:48px;top:500px;width:1237px;height:17px;background:#80b4f4"></div>
<div class="a" style="left:68px;top:517px;width:1217px;height:17px;background:#efefef"></div>
<div class="a m" style="left:31px;top:449px;width:1250px;height:17px;top:450.5px">Internet Protocol Version 4, Src: 104.120.69.246, Dst: 192.168.6.76</div>
<svg class="a" style="left:17px;top:453px" width="6" height="9" viewBox="0 0 6 9"><path d="M0.5 0.5 L5.5 4.5 L0.5 8.5Z" fill="#fff" stroke="#8c8c8c"/></svg>
<div class="a m" style="left:31px;top:466px;width:1250px;height:17px;top:467.5px">Transmission Control Protocol, Src Port: 80, Dst Port: 64278, Seq: 1, Ack: 1, Len: 414</div>
<svg class="a" style="left:17px;top:470px" width="6" height="9" viewBox="0 0 6 9"><path d="M0.5 0.5 L5.5 4.5 L0.5 8.5Z" fill="#fff" stroke="#8c8c8c"/></svg>
<div class="a m" style="left:31px;top:483px;width:1250px;height:17px;top:484.5px">Hypertext Transfer Protocol</div>
<svg class="a" style="left:16px;top:488px" width="7" height="7" viewBox="0 0 7 7"><path d="M6 0 L6 6 L0 6Z" fill="#3a3a3a"/></svg>
<div class="a m" style="left:51px;top:500px;width:1250px;height:17px;top:501.5px">HTTP/1.0 408 Request Time-out\r\n</div>
<svg class="a" style="left:36px;top:505px" width="7" height="7" viewBox="0 0 7 7"><path d="M6 0 L6 6 L0 6Z" fill="#3a3a3a"/></svg>
<div class="a m" style="left:71px;top:517px;width:1250px;height:17px;top:518.5px">[Expert Info (Chat/Sequence): HTTP/1.0 408 Request Time-out\r\n]</div>
<svg class="a" style="left:57px;top:521px" width="6" height="9" viewBox="0 0 6 9"><path d="M0.5 0.5 L5.5 4.5 L0.5 8.5Z" fill="#fff" stroke="#8c8c8c"/></svg>
<div class="a m" style="left:71px;top:534px;width:1250px;height:17px;top:535.5px">Request Version: HTTP/1.0</div>
<div class="a m" style="left:71px;top:551px;width:1250px;height:17px;top:552.5px">Status Code: 408</div>
<div class="a m" style="left:71px;top:568px;width:1250px;height:17px;top:569.5px">[Status Code Description: Request Time-out]</div>
<div class="a m" style="left:71px;top:585px;width:1250px;height:17px;top:586.5px">Response Phrase: Request Time-out</div>
<div class="a m" style="left:51px;top:602px;width:1250px;height:17px;top:603.5px">Server: AkamaiGHost\r\n</div>
<div class="a m" style="left:51px;top:619px;width:1250px;height:17px;top:620.5px">Mime-Version: 1.0\r\n</div>
<div class="a m" style="left:51px;top:636px;width:1250px;height:17px;top:637.5px">Date: Mon, 23 Apr 2018 11:33:59 GMT\r\n</div>
<div class="a m" style="left:51px;top:653px;width:1250px;height:17px;top:654.5px">Content-Type: text/html\r\n</div>
<div class="a m" style="left:51px;top:670px;width:1250px;height:17px;top:671.5px">Content-Length: 218\r\n</div>
<svg class="a" style="left:37px;top:674px" width="6" height="9" viewBox="0 0 6 9"><path d="M0.5 0.5 L5.5 4.5 L0.5 8.5Z" fill="#fff" stroke="#8c8c8c"/></svg>
<div class="a" style="left:62px;top:549px;width:147px;height:23px;border:3px solid #ec1c24"></div>
<div class="a" style="left:1285px;top:449px;width:17px;height:240px;background:linear-gradient(90deg,#fdfdfd 0,#f6f6f6 2px,#e6e6e6 4px,#ececec 9px,#f0f0f0 14px)"></div>
<svg class="a" style="left:1290px;top:455px" width="9" height="6" viewBox="0 0 9 6"><defs><linearGradient id="ag3" x1="0" y1="0" x2="1" y2="1"><stop offset="0.2" stop-color="#1e1e1e"/><stop offset="1" stop-color="#9a9a9a"/></linearGradient></defs><path d="M0.5 5 L4.5 1 L8.5 5Z" fill="url(#ag3)"/></svg>
<svg class="a" style="left:1290px;top:678px" width="9" height="6" viewBox="0 0 9 6"><defs><linearGradient id="ag4" x1="0" y1="0" x2="1" y2="1"><stop offset="0.2" stop-color="#1e1e1e"/><stop offset="1" stop-color="#9a9a9a"/></linearGradient></defs><path d="M0.5 1 L4.5 5 L8.5 1Z" fill="url(#ag4)"/></svg>
<div class="a" style="left:1286px;top:487px;width:15px;height:135px;background:linear-gradient(90deg,#f6f6f6 0,#ebebeb 6px,#dcdce0 7px,#cbcbd0 13px);border:1px solid #8e8e8e;border-radius:2px;box-shadow:inset 0 0 0 1px #fbfbfb"></div>
<svg class="a" style="left:1290px;top:551px" width="8" height="7" viewBox="0 0 8 7"><path d="M0 0.5H8M0 2.5H8M0 4.5H8M0 6.5H8" stroke="#555" stroke-width="1"/></svg>
<div class="a" style="left:6px;top:25px;width:1298px;height:1px;background:#8a8a8a"></div>
<div class="a" style="left:6px;top:25px;width:1px;height:664px;background:#7a7e83"></div>
<div class="a" style="left:7px;top:97px;width:1px;height:346px;background:#6c6c6c"></div>
<div class="a" style="left:7px;top:449px;width:1px;height:240px;background:#6c6c6c"></div>
<div class="a" style="left:7px;top:443px;width:1px;height:5px;background:#fcfcfc"></div>
<div class="a" style="left:1302px;top:97px;width:1px;height:346px;background:#868c94"></div>
<div class="a" style="left:1302px;top:449px;width:1px;height:240px;background:#868c94"></div>
<div class="a" style="left:1302px;top:443px;width:1px;height:5px;background:#f8f8f8"></div>
<div class="a" style="left:1303px;top:25px;width:1px;height:664px;background:#6e6e6e"></div>
<div class="a" style="left:0px;top:25px;width:5px;height:664px;background:linear-gradient(#fafafa,#f2f2f2 120px)"></div>
<div class="a" style="left:5px;top:25px;width:1px;height:664px;background:#fdfdfd"></div>
<div class="a" style="left:1304px;top:25px;width:1px;height:664px;background:#fdfdfd"></div>
<div class="a" style="left:1305px;top:25px;width:2px;height:664px;background:linear-gradient(#fdfdfd,#f0f0f0 120px)"></div>
<svg class="a" style="left:0px;top:47px" width="500" height="26" viewBox="0 47 500 26">
<defs>
<linearGradient id="fin" x1="0" y1="0" x2="0" y2="1"><stop offset="0" stop-color="#3d63e8"/><stop offset="1" stop-color="#1d36c4"/></linearGradient>
<linearGradient id="doc" x1="0" y1="0" x2="0" y2="1"><stop offset="0" stop-color="#1f96e6"/><stop offset="0.38" stop-color="#4fb0ee"/><stop offset="0.47" stop-color="#e6f2f6"/><stop offset="0.55" stop-color="#f6f4e4"/><stop offset="1" stop-color="#f6f4e4"/></linearGradient>
<linearGradient id="fold" x1="0" y1="0" x2="1" y2="0"><stop offset="0" stop-color="#f2dc86"/><stop offset="0.5" stop-color="#fbefb8"/><stop offset="1" stop-color="#e9c964"/></linearGradient>
<linearGradient id="btn" x1="0" y1="0" x2="0.3" y2="1"><stop offset="0" stop-color="#c8c8c8"/><stop offset="0.3" stop-color="#e8e8e8"/><stop offset="1" stop-color="#f2f2f2"/></linearGradient>
</defs>
<!-- start capture shark -->
<path d="M12.5 67.5 C14 60 19 54 27.5 52.5 C25.5 57 25.5 62 26.5 67.5 Z" fill="#f4f4f4" stroke="#c8c8c8" stroke-width="1"/>
<path d="M14 66.5 C16 60 20 55.5 25.5 54 C24 58 24 62 25 66.5 Z" fill="url(#fin)"/>
<!-- stop -->
<rect x="36.5" y="53.5" width="13" height="13" fill="#f8f8f8" stroke="#c8c8c8"/>
<rect x="38" y="55" width="10" height="10" fill="#8a8a8a"/>
<!-- restart shark gray -->
<path d="M58.5 67.5 C60 60 65 54 73.5 52.5 C71.5 57 71.5 62 72.5 67.5 Z" fill="#f4f4f4" stroke="#d0d0d0" stroke-width="1"/>
<path d="M60 66.5 C62 60 66 55.5 71.5 54 C70 58 70 62 71 66.5 Z" fill="#b4b4b4"/>
<path d="M67.5 58 V63 Q67.5 65 65.5 65 Q64 65 63.8 63.5" fill="none" stroke="#fff" stroke-width="1.6"/>
<!-- options gear -->
<circle cx="88.8" cy="59.8" r="7.2" fill="#fff" stroke="#8a8a8a" stroke-width="1.1"/>
<circle cx="88.8" cy="59.8" r="5.8" fill="#262626"/>
<g fill="#fff">
<circle cx="88.8" cy="59.8" r="3.5"/>
<rect x="88" y="55" width="1.6" height="9.6"/>
<rect x="88" y="55" width="1.6" height="9.6" transform="rotate(45 88.8 59.8)"/>
<rect x="88" y="55" width="1.6" height="9.6" transform="rotate(90 88.8 59.8)"/>
<rect x="88" y="55" width="1.6" height="9.6" transform="rotate(135 88.8 59.8)"/>
</g>
<rect x="87" y="58" width="3.6" height="3.6" rx="0.8" fill="#111"/>
<!-- separators -->
<rect x="103" y="52" width="1" height="16" fill="#d2d2d2"/>
<rect x="201" y="52" width="1" height="16" fill="#d2d2d2"/>
<rect x="368" y="52" width="1" height="16" fill="#d2d2d2"/>
<rect x="397" y="52" width="1" height="16" fill="#d2d2d2"/>
<!-- folder -->
<path d="M116.5 52.5 H121.5 Q122.6 52.5 122.6 53.6 V58 H123.6 Q124.2 58 124.2 58.8 V65.8 Q124.2 66.8 123 66.8 H116.5 Z" fill="#ecd171" stroke="#e2c35a" stroke-width="0.6"/>
<path d="M117.5 53 H121.6 V66.3 H117.5 Z" fill="#f3df8e"/>
<path d="M111.2 53.4 Q111.2 52.3 112.4 52.3 H116.2 Q117.6 52.3 117.8 53.8 V66.2 Q117.6 67.7 116 67.7 H112.4 Q111.2 67.7 111.2 66.6 Z" fill="#f7e89a" stroke="#e6c95e" stroke-width="0.6"/>
<rect x="114.6" y="53.5" width="1.1" height="10" fill="#fffbe6"/>
<rect x="117.6" y="53" width="0.9" height="14" fill="#d9bb52" opacity="0.7"/>
<rect x="121.9" y="59.6" width="1.1" height="2.6" fill="#f4f8fb"/>
<rect x="121.9" y="62" width="1.1" height="3" fill="#3b9be2"/>
<!-- doc icons -->
<path d="M134.5 52.5 H144 L147.5 56 V67.5 H134.5 Z" fill="url(#doc)" stroke="#707070"/>
<path d="M144 52.8 V56 H147.2" fill="#fffbe8" stroke="#8a8a8a" stroke-width="0.6"/>
<path d="M137.5 59.3 C138.5 58 139 56.5 139.3 55.2 C139.6 56.8 139.6 58.2 139.9 59.3 Z" fill="#fff" opacity="0.85"/>
<g fill="none" stroke="#5a5a5a" stroke-width="0.9">
<ellipse cx="137.6" cy="63.5" rx="1.3" ry="1.9"/>
<path d="M141 61.6 V65.4"/>
<circle cx="144.2" cy="62.5" r="1"/><circle cx="144.2" cy="64.5" r="1.1"/>
</g>
<path d="M157.5 52.5 H167 L170.5 56 V67.5 H157.5 Z" fill="url(#doc)" stroke="#707070"/>
<path d="M167 52.8 V56 H170.2" fill="#fffbe8" stroke="#8a8a8a" stroke-width="0.6"/>
<path d="M160.5 59.3 C161.5 58 162 56.5 162.3 55.2 C162.6 56.8 162.6 58.2 162.9 59.3 Z" fill="#fff" opacity="0.85"/>
<path d="M158.8 54.2 L169.3 66.2 M169.3 54.2 L158.8 66.2" stroke="#262626" stroke-width="1.9"/>
<path d="M180.5 52.5 H190 L193.5 56 V67.5 H180.5 Z" fill="url(#doc)" stroke="#707070"/>
<path d="M190 52.8 V56 H193.2" fill="#fffbe8" stroke="#8a8a8a" stroke-width="0.6"/>
<path d="M183.5 59.3 C184.5 58 185 56.5 185.3 55.2 C185.6 56.8 185.6 58.2 185.9 59.3 Z" fill="#fff" opacity="0.85"/>
<path d="M190.6 57.8 A4.3 4.3 0 1 0 191.3 63.2" fill="none" stroke="#1d3f98" stroke-width="1.8"/>
<path d="M187.6 54.6 L192.2 57.6 L187.9 59.8 Z" fill="#1d3f98"/>
<!-- find -->
<circle cx="215.3" cy="57.8" r="4.2" fill="#fff" fill-opacity="0.3" stroke="#2d2d2d" stroke-width="1.2"/>
<path d="M217.8 62 L220.3 66" stroke="#2d2d2d" stroke-width="2.2" stroke-linecap="round"/>
<!-- back/forward arrows -->
<path d="M232.5 60 L238 55 V57.5 H245.5 V62.5 H238 V65 Z" fill="#fff" stroke="#8c8c8c" stroke-linejoin="round"/>
<path d="M235 60 L238.5 57.3 V59 H244 V61 H238.5 V62.7 Z" fill="#5bb31c"/>
<path d="M268.5 60 L263 55 V57.5 H255.5 V62.5 H263 V65 Z" fill="#fff" stroke="#8c8c8c" stroke-linejoin="round"/>
<path d="M266 60 L262.5 57.3 V59 H257 V61 H262.5 V62.7 Z" fill="#5bb31c"/>
<!-- go to packet -->
<g fill="#222">
<rect x="279" y="54" width="14" height="1.1"/>
<rect x="279" y="60" width="14" height="1.1"/>
<rect x="279" y="63" width="14" height="1.1"/>
<rect x="279" y="66" width="14" height="1.1"/>
</g>
<rect x="290" y="56" width="3" height="3" fill="#f6de3c"/>
<path d="M290.5 58.5 L285.5 53.8 V56 H277.5 V61 H285.5 V63.2 Z" fill="#fff" stroke="#8c8c8c" stroke-linejoin="round"/>
<path d="M288.3 58.5 L285 56 V57.5 H279 V59.5 H285 V61 Z" fill="#5bb31c"/>
<!-- go first -->
<rect x="301" y="52" width="14" height="1.1" fill="#444"/>
<path d="M308 54 L303.3 59.5 H305.8 V66.5 H310.2 V59.5 H312.7 Z" fill="#fff" stroke="#8c8c8c" stroke-linejoin="round"/>
<path d="M308 56 L305.5 59 H307 V65 H309 V59 H310.5 Z" fill="#3ea00e"/>
<!-- go last -->
<rect x="324" y="67" width="14" height="1.1" fill="#444"/>
<path d="M331 66 L326.3 60.5 H328.8 V53.5 H333.2 V60.5 H335.7 Z" fill="#fff" stroke="#8c8c8c" stroke-linejoin="round"/>
<path d="M331 64 L328.5 61 H330 V55 H332 V61 H333.5 Z" fill="#3ea00e"/>
<!-- auto scroll button pressed -->
<rect x="343.5" y="50.5" width="22" height="19" rx="3" fill="url(#btn)" stroke="#5a5a5a" stroke-width="1.3"/>
<rect x="347.5" y="54" width="15" height="14" fill="#fbfbf8"/>
<rect x="348" y="54" width="14" height="1.1" fill="#222"/>
<rect x="348" y="57" width="14" height="1" fill="#b8bcb0"/>
<rect x="348" y="60" width="14" height="1" fill="#b8bcb0"/>
<rect x="348" y="63" width="14" height="1" fill="#b8bcb0"/>
<rect x="348" y="67" width="14" height="1.1" fill="#222"/>
<path d="M354 63 H362 L359.5 67.5 H356.5 Z" fill="#2c64b4"/>
<!-- colorize button pressed -->
<rect x="372.5" y="50.5" width="22" height="19" rx="3" fill="url(#btn)" stroke="#5a5a5a" stroke-width="1.3"/>
<rect x="376.5" y="54" width="15" height="13" fill="#fbfbf8"/>
<rect x="377" y="54" width="14" height="1.1" fill="#222"/>
<rect x="377" y="57" width="14" height="1.1" fill="#e02828"/>
<rect x="377" y="60" width="14" height="1.1" fill="#2a56b0"/>
<rect x="377" y="63" width="14" height="1.1" fill="#7a4c8c"/>
<rect x="377" y="66" width="14" height="1.1" fill="#222"/>
<!-- zoom in/out/normal -->
<g stroke="#2d2d2d" fill="none">
<circle cx="410.7" cy="58.5" r="4.9" stroke-width="1.3"/>
<path d="M415 63 L418 66" stroke-width="2.6" stroke-linecap="round"/>
<path d="M408 58.5 H413.4 M410.7 55.8 V61.2" stroke-width="1.3"/>
<circle cx="433.7" cy="58.5" r="4.9" stroke-width="1.3"/>
<path d="M438 63 L441 66" stroke-width="2.6" stroke-linecap="round"/>
<path d="M431 58.5 H436.4" stroke-width="1.3"/>
<circle cx="456.6" cy="58.5" r="4.9" stroke-width="1.3"/>
<path d="M460.9 63 L463.9 66" stroke-width="2.6" stroke-linecap="round"/>
<path d="M454 57.3 H459.2 M454 59.8 H459.2" stroke-width="1.1"/>
</g>
<!-- resize columns -->
<rect x="474" y="53" width="14" height="1.1" fill="#222"/>
<rect x="474" y="66" width="14" height="1.1" fill="#222"/>
<rect x="474" y="56" width="14" height="0.8" fill="#c8c8c0"/>
<rect x="474" y="59" width="14" height="0.8" fill="#c8c8c0"/>
<rect x="474" y="62" width="14" height="0.8" fill="#c8c8c0"/>
<rect x="478.5" y="54" width="1" height="12" fill="#8a8a8a"/>
<rect x="483" y="54" width="1" height="12" fill="#8a8a8a"/>
<path d="M475 55 L478.5 58.5 L475 62 Z" fill="#3a72c4"/>
<path d="M487 55 L483.5 58.5 L487 62 Z" fill="#3a72c4"/>
</svg>
</body></html>
